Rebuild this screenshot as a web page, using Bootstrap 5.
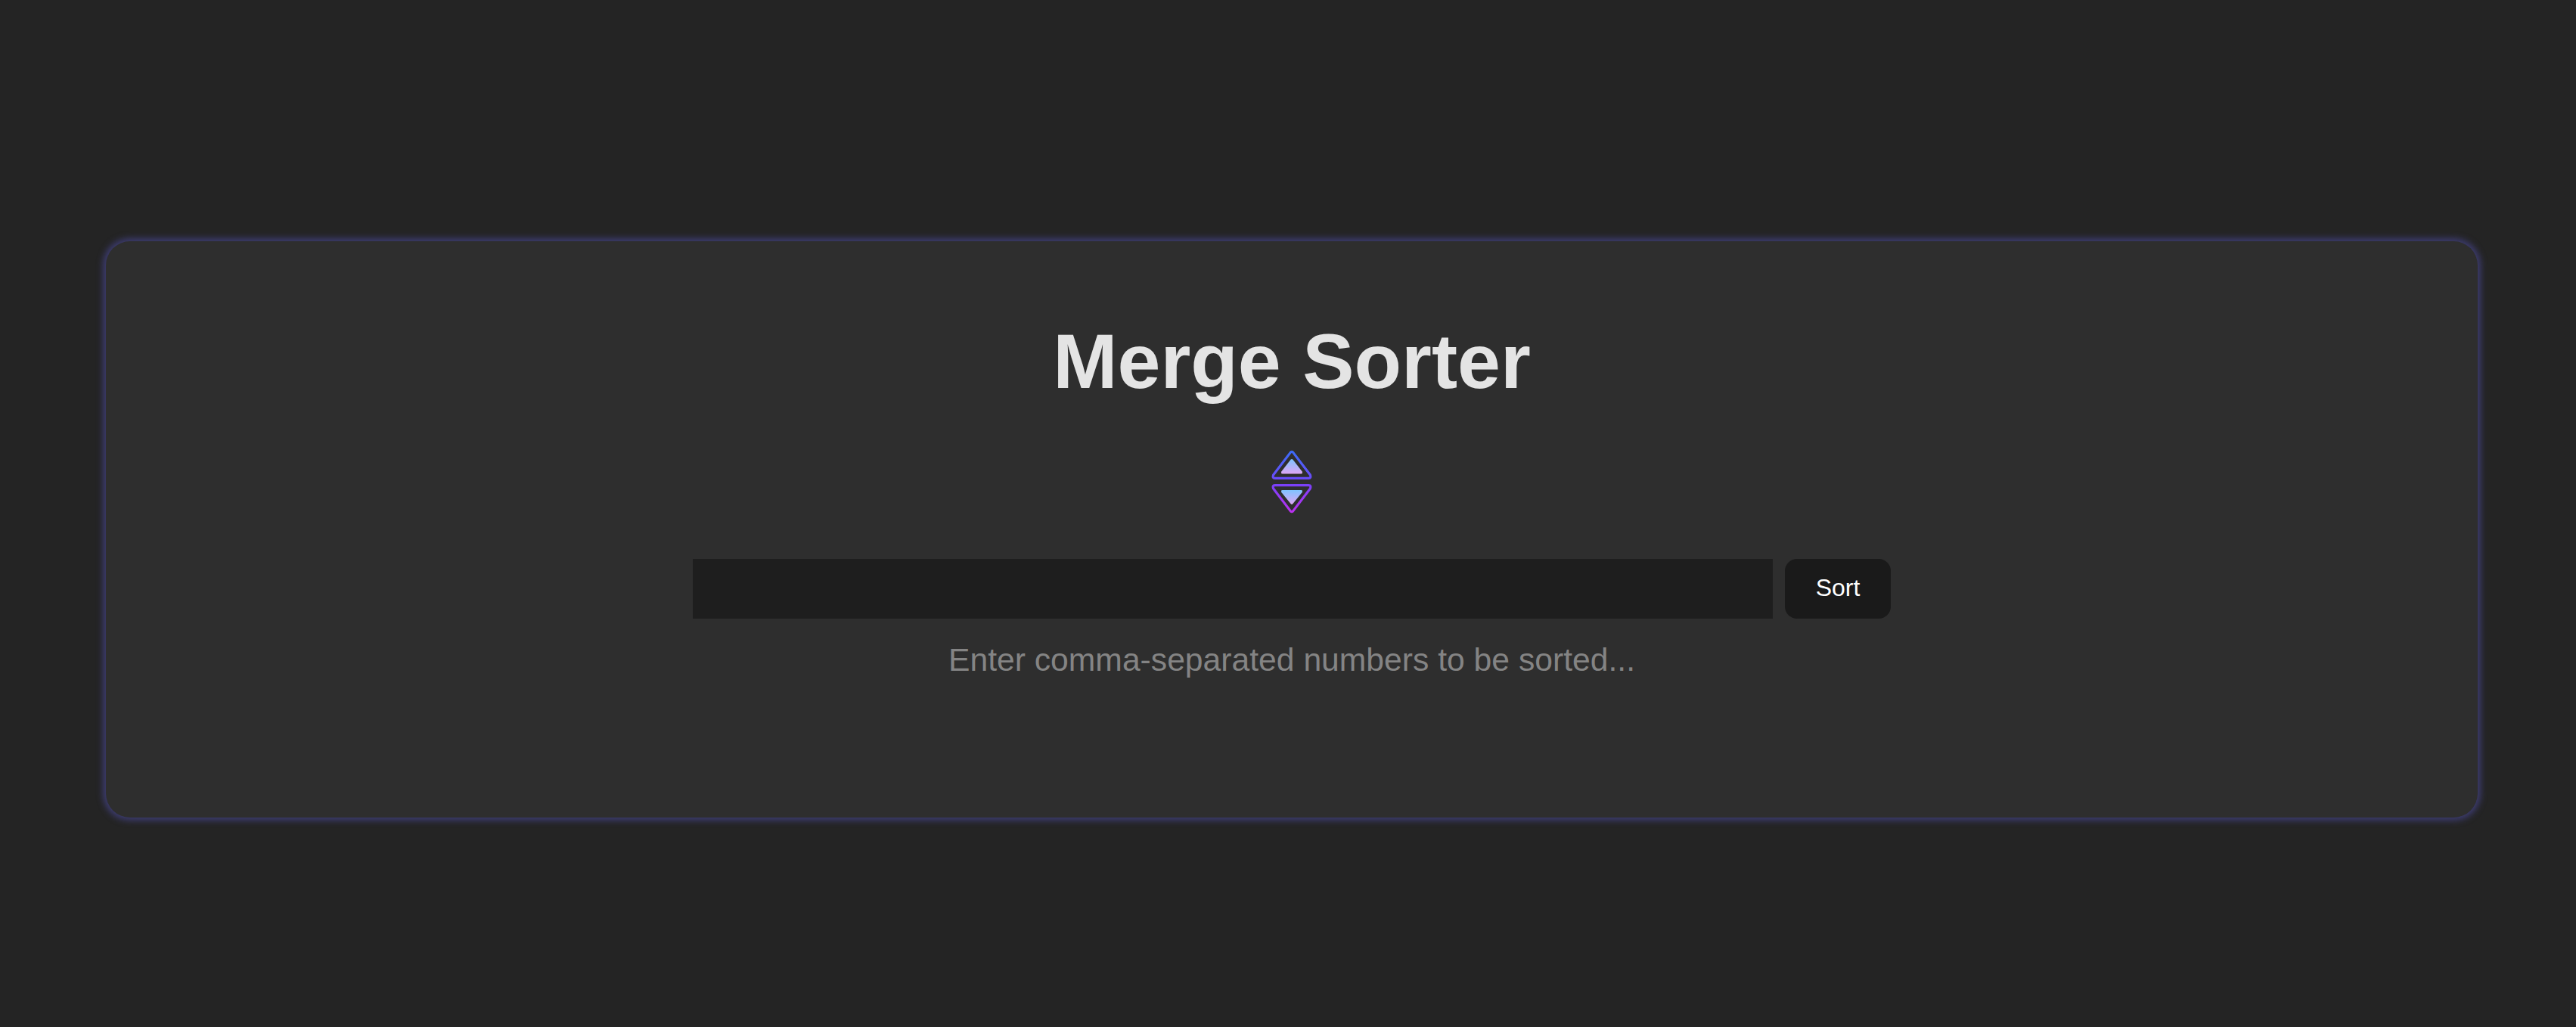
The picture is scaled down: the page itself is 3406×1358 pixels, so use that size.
<!DOCTYPE html>
<html lang="en">
<head>
<meta charset="utf-8">
<meta name="viewport" content="width=device-width, initial-scale=1">
<title>Merge Sorter</title>
<link href="https://cdn.jsdelivr.net/npm/bootstrap@5.3.0/dist/css/bootstrap.min.css" rel="stylesheet">
<style>
body{background:#242424;color:#e4e4e4;font-family:"Liberation Sans",Arial,sans-serif;overflow:hidden}
.page{height:1358px;padding:319px 130px 0 140px}
.sorter{height:762px;background:#2e2e2e;border-radius:32px;box-shadow:0 0 8px 4px #3d3c70;padding-top:102px}
.title{font-size:102.4px;line-height:113px;font-weight:700}
.logo{width:56px;height:90px;margin-top:58px}
.bar{width:1584px;height:79px;gap:16px;margin-top:57px}
.field,.field:focus{background:#1e1e1e;border:0;border-radius:0;color:#fff;font-size:32px;box-shadow:none}
.go{width:140px;background:#1a1a1a;color:#fff;font-size:32px;line-height:1;border-radius:16px;border:0;padding:0 0 3px}
.hint{font-size:42.67px;line-height:62px;color:#848484;margin-top:23px}
</style>
</head>
<body>
<main class="page">
<section class="sorter d-flex flex-column align-items-center">
<h1 class="title m-0">Merge Sorter</h1>
<svg class="logo flex-shrink-0" viewBox="0 0 56 90" aria-hidden="true">
<defs>
<linearGradient id="edge" gradientUnits="userSpaceOnUse" x1="0" y1="4" x2="0" y2="86"><stop offset="0" stop-color="#3b6cf6"/><stop offset=".45" stop-color="#6a4bf8"/><stop offset=".56" stop-color="#7c40f8"/><stop offset="1" stop-color="#bb30ee"/></linearGradient>
<linearGradient id="fill" x1="0" y1="0" x2="0" y2="1"><stop offset="0" stop-color="#7fc4ff"/><stop offset="1" stop-color="#dda6f4"/></linearGradient>
</defs>
<g fill="none" stroke="url(#edge)" stroke-width="3.2" stroke-linejoin="round">
<path d="M26.400 6.100Q28 4.400 29.600 6.100L52.400 36Q54 40.300 50.300 40.300H5.700Q2 40.300 3.600 36Z"/>
<path d="M26.400 83.900Q28 85.600 29.600 83.900L52.400 54Q54 49.700 50.300 49.700H5.700Q2 49.700 3.600 54Z"/>
</g>
<path fill="url(#fill)" d="M26.700 15.600Q28 14.200 29.300 15.600L41.500 31.300Q43 34.500 40.300 34.500H15.700Q13 34.500 14.500 31.300Z"/>
<path fill="url(#fill)" d="M26.700 74.200Q28 75.600 29.300 74.200L41.500 59.200Q43 56 40.300 56H15.700Q13 56 14.500 59.200Z"/>
</svg>
<form class="bar d-flex flex-shrink-0" onsubmit="return false">
<input class="field form-control flex-fill" type="text" aria-label="Numbers">
<button class="go btn flex-shrink-0" type="submit">Sort</button>
</form>
<p class="hint mb-0">Enter comma-separated numbers to be sorted...</p>
</section>
</main>
<script src="https://cdn.jsdelivr.net/npm/bootstrap@5.3.0/dist/js/bootstrap.bundle.min.js"></script>
</body>
</html>
